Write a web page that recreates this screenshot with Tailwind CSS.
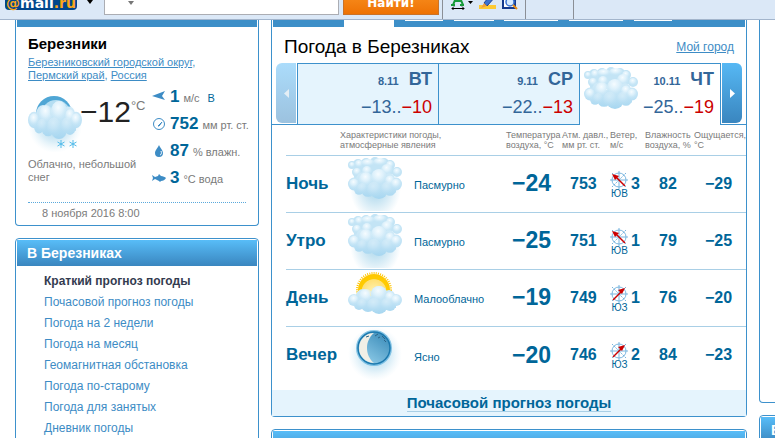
<!DOCTYPE html>
<html lang="ru">
<head>
  <meta charset="UTF-8" />
  <meta name="viewport" content="width=device-width, initial-scale=1.0"/>
  <title>Погода в Березниках</title>
  <script src="https://cdn.jsdelivr.net/npm/@tailwindcss/browser@4"></script>
</head>
<body class="h-screen overflow-hidden flex flex-col bg-white font-['Liberation_Sans',Arial,sans-serif] text-[12px] text-[#7a7a7a]">

  <!-- Иконки -->
  <svg class="absolute w-0 h-0" aria-hidden="true">
    <defs>
      <radialGradient id="puff" cx="45%" cy="30%" r="60%">
        <stop offset="0" stop-color="#f6fcff"/>
        <stop offset="0.5" stop-color="#e2f3fc" stop-opacity="0.8"/>
        <stop offset="1" stop-color="#c4e5f6" stop-opacity="0.3"/>
      </radialGradient>
      <linearGradient id="belly" gradientUnits="userSpaceOnUse" x1="0" y1="0" x2="0" y2="28">
        <stop offset="0" stop-color="#d6edf9"/>
        <stop offset="0.6" stop-color="#bfe2f5"/>
        <stop offset="1" stop-color="#a6d6f0"/>
      </linearGradient>
      <radialGradient id="haze">
        <stop offset="0" stop-color="#6fbbe0" stop-opacity="0.75"/>
        <stop offset="0.6" stop-color="#a5d5ec" stop-opacity="0.4"/>
        <stop offset="1" stop-color="#cbe7f4" stop-opacity="0"/>
      </radialGradient>
      <radialGradient id="sun" cx="50%" cy="55%" r="50%">
        <stop offset="0" stop-color="#fff3b5"/>
        <stop offset="0.75" stop-color="#ffe075"/>
        <stop offset="0.8" stop-color="#ffcc00"/>
        <stop offset="1" stop-color="#ffc800"/>
      </radialGradient>
      <linearGradient id="moon" x1="1" y1="0" x2="0.3" y2="1">
        <stop offset="0" stop-color="#3286b5"/>
        <stop offset="1" stop-color="#8fcbe8"/>
      </linearGradient>
    </defs>
    <symbol id="cloud" viewBox="0 0 54 28" preserveAspectRatio="none">
      <g fill="url(#belly)">
        <circle cx="6" cy="14" r="6"/><circle cx="11" cy="19" r="5"/><circle cx="15" cy="10" r="7"/>
        <circle cx="20" cy="19" r="7"/><circle cx="31" cy="8" r="8"/><circle cx="31" cy="19" r="9"/>
        <circle cx="42" cy="19" r="6"/><circle cx="41" cy="10" r="6"/><circle cx="48" cy="14" r="6"/>
        <path d="M8 10h40v12H8z"/>
      </g>
      <g fill="url(#puff)">
        <circle cx="6" cy="14" r="5"/><circle cx="18" cy="10" r="7"/><circle cx="31" cy="8" r="8"/>
        <circle cx="42" cy="11" r="5"/><circle cx="48" cy="14" r="5"/>
      </g>
      <g fill="url(#puff)" opacity="0.35">
        <circle cx="14" cy="18" r="5"/><circle cx="26" cy="19" r="7"/><circle cx="39" cy="18" r="6"/>
      </g>
    </symbol>
    <symbol id="clouds" viewBox="0 0 55 43">
      <g fill="#c3e4f5">
        <circle cx="4" cy="8" r="4"/><circle cx="10" cy="7" r="5"/><circle cx="18" cy="6" r="5"/>
        <circle cx="27" cy="5" r="5"/><circle cx="36" cy="6" r="5"/><circle cx="42" cy="8" r="5"/>
        <circle cx="9" cy="15" r="5"/><circle cx="39" cy="13" r="7"/><circle cx="49" cy="15" r="5"/>
        <path d="M6 6h38v16H6z"/>
      </g>
      <g fill="url(#puff)">
        <circle cx="4" cy="8" r="3"/><circle cx="11" cy="7" r="4"/><ellipse cx="20" cy="6" rx="7" ry="4"/>
        <ellipse cx="32" cy="5" rx="7" ry="4"/><circle cx="42" cy="8" r="4"/><circle cx="9" cy="15" r="4"/>
        <circle cx="19" cy="14" r="5"/><circle cx="39" cy="13" r="6"/><circle cx="49" cy="15" r="4"/>
      </g>
      <use href="#cloud" x="0" y="12" width="54" height="30"/>
    </symbol>
    <symbol id="sunny" viewBox="0 0 55 43">
      <circle cx="26" cy="18" r="17" fill="none" stroke="#ffc400" stroke-width="2" stroke-dasharray="1 1.2"/>
      <circle cx="26" cy="18" r="16" fill="url(#sun)"/>
      <use href="#cloud" x="0" y="14" width="54" height="28"/>
    </symbol>
    <symbol id="night" viewBox="0 0 55 55">
      <circle cx="27" cy="26" r="27" fill="url(#haze)"/>
      <circle cx="26" cy="20" r="18" fill="#57aedb" opacity="0.7"/>
      <circle cx="26" cy="20" r="16" fill="url(#moon)" stroke="#1b78ad" stroke-width="1.5"/>
      <path d="M26 5A15 15 0 0 0 26 35C21 31 19 25 19 20S21 9 26 5z" fill="#f1efe6"/>
      <path d="M27 8l3-2M30 10l2-1M34 8l3 3M36 12l2 2M18 9l3-1" stroke="#2c6487"/>
    </symbol>
    <symbol id="rose" viewBox="0 0 18 18">
      <g fill="none" stroke="#78b5df">
        <circle cx="9" cy="9" r="7"/>
        <path d="M9 0v18M0 9h18"/>
        <path d="M2 2l14 14M16 2L2 16" stroke-dasharray="2 1"/>
      </g>
    </symbol>
    <symbol id="rose-se" viewBox="0 0 18 18">
      <use href="#rose" width="18" height="18"/>
      <path d="M15 15L5 5" stroke="#c00" stroke-width="1.500"/>
      <path d="M2 3l7 2-4 4z" fill="#c00"/>
    </symbol>
    <symbol id="rose-sw" viewBox="0 0 18 18">
      <use href="#rose" width="18" height="18"/>
      <path d="M3 15L13 5" stroke="#c00" stroke-width="1.500"/>
      <path d="M15 3l-7 2 4 4z" fill="#c00"/>
    </symbol>
  </svg>

  <!-- Панель браузера -->
  <div class="h-5 shrink-0 flex items-end overflow-hidden bg-[#dbe8f7] border-b border-[#a3b5cc] pl-[5px] relative z-10">
    <div class="h-6 w-[72px] mb-[9px] rounded bg-[#00468c] text-center text-[14px] leading-[34px] font-bold font-['DejaVu_Sans',sans-serif] text-white"><span class="text-[#faa61a]">@</span>mail<span class="text-[#faa61a]">.ru</span></div>
    <span class="w-[27px] pl-[10px] pb-[15px]"><svg class="w-[6px] h-[4px]" viewBox="0 0 6 4"><path d="M0 0h6L3 4z" fill="#000"/></svg></span>
    <div class="relative mb-1">
      <input type="text" aria-label="Поиск" class="block w-[235px] h-6 bg-white border border-[#abadb3]">
      <svg class="absolute left-[24px] bottom-[10px] w-[6px] h-[4px]" viewBox="0 0 6 4"><path d="M0 0h6L3 4z" fill="#777"/></svg>
    </div>
    <button class="w-[96px] h-6 mb-1 ml-1 bg-linear-to-b from-[#f98f1d] to-[#ee7203] border border-[#c9732a] text-white text-[12px] leading-[22px] font-bold font-['DejaVu_Sans',sans-serif]">Найти!</button>
    <div class="flex items-end gap-[6px] h-5 ml-[3px] pl-2 pb-[9px] border-l border-[#8b8f96]">
      <svg class="w-[22px] h-[18px]" viewBox="0 0 22 18"><path d="M2 13L7 1l5 12M4 9h6M0 13h4M9 13h4" fill="none" stroke="#169a3a" stroke-width="2"/><path d="M1 16.500h12M3 14.500l-2 2 2 2M11 14.500l2 2-2 2" fill="none" stroke="#000"/><path d="M17 9h5l-2.500 3z" fill="#000"/></svg>
      <svg class="w-[17px] h-[18px]" viewBox="0 0 17 18"><path d="M0 13h17v4H0z" fill="#fdca35"/><path d="M5 11L13 1l4 3-9 10z" fill="#3b73d1" stroke="#1d3f91"/><path d="M2 16l3-5 3 3z" fill="#f2a03d"/></svg>
      <svg class="w-[16px] h-[18px]" viewBox="0 0 16 18"><path d="M1 0v16h12V0" fill="#fff" stroke="#14398c" stroke-width="2"/><circle cx="8" cy="10" r="4" fill="#d7ebff" stroke="#3b73d1" stroke-width="1.500"/><path d="M11 13l4 4" stroke="#e88b12" stroke-width="2"/></svg>
    </div>
    <span class="h-5 w-2 border-r border-[#8b8f96]"></span>
    <span class="h-5 w-12 border-r border-[#8b8f96]"></span>
  </div>

  <div class="flex-1 min-h-0 flex items-start gap-3 pl-[15px]">

    <!-- Левая колонка -->
    <aside class="w-[244px] shrink-0">
      <section class="border border-t-0 border-[#3d91cc] rounded-b px-px pb-px mb-3">
        <div class="h-[7px] bg-[#3d8fc8]"></div>
        <div class="px-[11px] pt-[8px]">
          <h2 class="text-[15px] leading-[18px] font-bold text-black">Березники</h2>
          <p class="mt-[3px] text-[11px] leading-[13px] text-[#3d8cc5]">
            <a href="#" class="underline">Березниковский городской округ</a>,<br>
            <a href="#" class="underline">Пермский край</a>, <a href="#" class="underline">Россия</a>
          </p>
          <div class="flex pt-px">
            <div class="w-[124px] shrink-0 pt-3">
              <div class="flex">
                <svg class="w-[55px] h-[57px] shrink-0" viewBox="0 0 55 57">
                  <circle cx="27" cy="31" r="27" fill="url(#haze)"/>
                  <circle cx="26" cy="19" r="18" fill="#4fa6d5"/>
                  <circle cx="28" cy="20" r="15" fill="#b5def2"/>
                  <use href="#cloud" x="0" y="6" width="54" height="38"/>
                  <path d="M33 45v8M29.500 47l7 4M36.500 47l-7 4M45 45v8M41.500 47l7 4M48.500 47l-7 4" stroke="#52bbea"/>
                </svg>
                <div class="flex text-[30px] leading-[34px] text-[#222] -ml-[3px]">−12<span class="text-[13px] leading-[22px] text-[#7a7a7a]">°C</span></div>
              </div>
              <p class="mt-[6px] text-[11px] leading-[13px]">Облачно, небольшой снег</p>
            </div>
            <ul class="text-[11px] whitespace-nowrap">
              <li class="flex items-center gap-[4px] h-[27px]">
                <svg class="w-[14px] h-3" viewBox="0 0 14 12"><path d="M0 5l13-5-3 5 3 4z" fill="#3d8cc5"/></svg>
                <b class="text-[17px] text-[#069]">1</b> <span class="pt-1">м/с</span> <span class="pt-1 ml-1 text-[#069]">В</span>
              </li>
              <li class="flex items-center gap-[4px] h-[27px]">
                <svg class="w-[14px] h-3" viewBox="0 0 14 12"><circle cx="7" cy="6" r="5.500" fill="none" stroke="#3d8cc5"/><path d="M6 8l4-4-3 4z" stroke="#3d8cc5"/></svg>
                <b class="text-[17px] text-[#069]">752</b> <span class="pt-1">мм рт. ст.</span>
              </li>
              <li class="flex items-center gap-[4px] h-[27px]">
                <svg class="w-[14px] h-3" viewBox="0 0 14 12"><path d="M7 0c1 3 4 5 4 8a4 4 0 0 1-8 0c0-3 3-5 4-8z" fill="#3d8cc5"/><path d="M9 6c1 2 0 4-1 4" stroke="#fff" fill="none"/></svg>
                <b class="text-[17px] text-[#069]">87</b> <span class="pt-1">% влажн.</span>
              </li>
              <li class="flex items-center gap-[4px] h-[27px]">
                <svg class="w-[14px] h-3" viewBox="0 0 14 12"><path d="M0 3l3 2 3-1 1-2 2 2c2 0 4 1 5 2-1 2-3 3-5 3l-1 1-1-1-4-2-3 2 1-3z" fill="#3d8cc5"/></svg>
                <b class="text-[17px] text-[#069]">3</b> <span class="pt-1">°C вода</span>
              </li>
            </ul>
          </div>
          <p class="mt-[11px] mb-[4px] pl-[14px] border-t border-dotted border-[#5aa9dc] pt-[3px] text-[11px] leading-[14px]">8 ноября 2016 8:00</p>
        </div>
      </section>

      <section class="border border-[#3d91cc] rounded-t p-px h-60">
        <h2 class="h-[26px] pl-[10px] bg-linear-to-b from-[#58bdf8] to-[#3a86bf] text-[14px] leading-[26px] font-bold text-white">В Березниках</h2>
        <nav class="pt-[5px] pl-[27px] flex flex-col text-[12px] leading-[21px] text-[#3d8cc5]">
          <b class="text-[#333b4f]">Краткий прогноз погоды</b>
          <a href="#">Почасовой прогноз погоды</a>
          <a href="#">Погода на 2 недели</a>
          <a href="#">Погода на месяц</a>
          <a href="#">Геомагнитная обстановка</a>
          <a href="#">Погода по-старому</a>
          <a href="#">Погода для занятых</a>
          <a href="#">Дневник погоды</a>
        </nav>
      </section>
    </aside>

    <!-- Прогноз -->
    <main class="flex-1 min-w-0">
      <section class="border border-t-0 border-[#3d91cc] rounded-b mb-3">
        <div class="mx-px h-[7px] bg-[#3d8fc8] flex">
          <span class="w-[50px] ml-[71px] bg-white"></span>
          <span class="w-[38px] h-px ml-[11px] bg-white"></span>
          <span class="w-[40px] h-px ml-[11px] bg-white"></span>
          <span class="w-[54px] h-px ml-[10px] bg-white"></span>
          <span class="w-[54px] h-px ml-[11px] bg-white"></span>
          <span class="w-[38px] h-px ml-[11px] bg-white"></span>
        </div>
        <div class="flex items-end justify-between h-9 pl-3 pr-3 pb-[5px]">
          <h1 class="text-[19px] leading-[22px] text-black">Погода в Березниках</h1>
          <a href="#" class="text-[12px] leading-[22px] text-[#3d8cc5] underline">Мой город</a>
        </div>

        <div class="flex h-[62px] text-[#369]">
          <div class="w-[25px] shrink-0 pl-1 border-b border-[#3d91cc]">
            <button aria-label="Назад" class="w-5 h-[60px] flex items-center justify-center rounded-l-md bg-linear-to-b from-[#abdcfb] to-[#9cc2df]"><svg class="w-[5px] h-[9px]" viewBox="0 0 5 9"><path d="M5 0v9L0 4.500z" fill="#e4eef5"/></svg></button>
          </div>
          <div class="flex-1 grid grid-cols-3 border-r border-[#3d91cc] text-[18px] leading-[20px] text-right">
            <div class="border border-r-0 border-[#3d91cc] bg-[#e5f4fd] pr-[6px] pt-[5px]">
              <div class="flex justify-end items-baseline gap-[10px] font-bold"><span class="text-[11px]">8.11</span><span>ВТ</span></div>
              <div class="mt-[6px]">−13..<span class="text-[#c00]">−10</span></div>
            </div>
            <div class="border border-r-0 border-[#3d91cc] bg-[#e5f4fd] pr-[6px] pt-[5px]">
              <div class="flex justify-end items-baseline gap-[10px] font-bold"><span class="text-[11px]">9.11</span><span>СР</span></div>
              <div class="mt-[6px]">−22..<span class="text-[#c00]">−13</span></div>
            </div>
            <div class="flex justify-between border border-r-0 border-b-0 border-[#3d91cc] pl-1 pr-[6px]">
              <svg class="w-[55px] h-[43px] mt-[3px]"><use href="#clouds"/></svg>
              <div class="pt-[5px]">
                <div class="flex justify-end items-baseline gap-[10px] font-bold"><span class="text-[11px]">10.11</span><span>ЧТ</span></div>
                <div class="mt-[6px]">−25..<span class="text-[#c00]">−19</span></div>
              </div>
            </div>
          </div>
          <div class="w-[25px] shrink-0 pl-px border-b border-[#3d91cc]">
            <button aria-label="Вперёд" class="w-5 h-[60px] flex items-center justify-center rounded-r-md bg-linear-to-b from-[#56b8f4] to-[#3a86bf]"><svg class="w-[5px] h-[9px]" viewBox="0 0 5 9"><path d="M0 0v9l5-4.500z" fill="#fff"/></svg></button>
          </div>
        </div>

        <div class="pl-[14px]">
          <table class="w-full table-fixed border-collapse text-left text-[16px] font-bold text-[#069]">
            <colgroup>
              <col class="w-[54px]"><col class="w-[74px]"><col>
              <col class="w-[56px]"><col class="w-[48px]"><col class="w-[35px]"><col class="w-[49px]"><col class="w-[52px]">
            </colgroup>
            <thead>
              <tr class="h-[30px] align-top text-[9px] leading-[10px] text-[#7a7a7a] whitespace-nowrap">
                <th></th>
                <th colspan="2" class="font-normal pt-[5px]">Характеристики погоды,<br>атмосферные явления</th>
                <th class="font-normal pt-[5px]">Температура<br>воздуха, °C</th>
                <th class="font-normal pt-[5px]">Атм. давл.,<br>мм рт. ст.</th>
                <th class="font-normal pt-[5px]">Ветер,<br>м/с</th>
                <th class="font-normal pt-[5px]">Влажность<br>воздуха, %</th>
                <th class="font-normal pt-[5px]">Ощущается,<br>°C</th>
              </tr>
            </thead>
            <tbody>
              <tr class="h-[57px] border-t border-[#a9cfe6]">
                <th class="text-[17px]">Ночь</th>
                <td class="pl-2 align-top">
                  <div class="h-[55px] w-[55px] pt-px bg-radial-[at_50%_60%] from-[#a3d3ea] to-transparent to-65%"><svg class="w-[55px] h-[43px]"><use href="#clouds"/></svg></div>
                </td>
                <td class="text-[11px] font-normal pt-1">Пасмурно</td>
                <td class="pl-[6px] text-[23px]">−24</td>
                <td class="pl-2">753</td>
                <td>
                  <div class="flex items-center gap-[2px]">
                    <div class="w-[19px] pt-[2px] text-center text-[10px] leading-[10px] font-normal"><svg class="w-[18px] h-[18px]"><use href="#rose-se"/></svg>ЮВ</div>3
                  </div>
                </td>
                <td class="pl-[14px]">82</td>
                <td class="pl-[11px]">−29</td>
              </tr>
              <tr class="h-[57px] border-t border-[#a9cfe6]">
                <th class="text-[17px]">Утро</th>
                <td class="pl-2 align-top">
                  <div class="h-[55px] w-[55px] pt-px bg-radial-[at_50%_60%] from-[#a3d3ea] to-transparent to-65%"><svg class="w-[55px] h-[43px]"><use href="#clouds"/></svg></div>
                </td>
                <td class="text-[11px] font-normal pt-1">Пасмурно</td>
                <td class="pl-[6px] text-[23px]">−25</td>
                <td class="pl-2">751</td>
                <td>
                  <div class="flex items-center gap-[2px]">
                    <div class="w-[19px] pt-[2px] text-center text-[10px] leading-[10px] font-normal"><svg class="w-[18px] h-[18px]"><use href="#rose-se"/></svg>ЮВ</div>1
                  </div>
                </td>
                <td class="pl-[14px]">79</td>
                <td class="pl-[11px]">−25</td>
              </tr>
              <tr class="h-[57px] border-t border-[#a9cfe6]">
                <th class="text-[17px]">День</th>
                <td class="pl-2 pt-[2px] align-top"><svg class="w-[55px] h-[43px]"><use href="#sunny"/></svg></td>
                <td class="text-[11px] font-normal pt-1">Малооблачно</td>
                <td class="pl-[6px] text-[23px]">−19</td>
                <td class="pl-2">749</td>
                <td>
                  <div class="flex items-center gap-[2px]">
                    <div class="w-[19px] pt-[2px] text-center text-[10px] leading-[10px] font-normal"><svg class="w-[18px] h-[18px]"><use href="#rose-sw"/></svg>ЮЗ</div>1
                  </div>
                </td>
                <td class="pl-[14px]">76</td>
                <td class="pl-[11px]">−20</td>
              </tr>
              <tr class="h-[57px] border-t border-[#a9cfe6]">
                <th class="text-[17px]">Вечер</th>
                <td class="pl-2 pt-px align-top"><svg class="w-[55px] h-[55px]"><use href="#night"/></svg></td>
                <td class="text-[11px] font-normal pt-1">Ясно</td>
                <td class="pl-[6px] text-[23px]">−20</td>
                <td class="pl-2">746</td>
                <td>
                  <div class="flex items-center gap-[2px]">
                    <div class="w-[19px] pt-[2px] text-center text-[10px] leading-[10px] font-normal"><svg class="w-[18px] h-[18px]"><use href="#rose-sw"/></svg>ЮЗ</div>2
                  </div>
                </td>
                <td class="pl-[14px]">84</td>
                <td class="pl-[11px]">−23</td>
              </tr>
            </tbody>
          </table>
        </div>
        <div class="mt-[7px] h-[26px] bg-[#e5f4fd] text-center leading-[26px]">
          <a href="#" class="inline-block h-[22px] border-b border-[#a9cfe6] text-[15px] font-bold text-[#069]">Почасовой прогноз погоды</a>
        </div>
      </section>

      <section class="border border-[#3d91cc] rounded-t p-px">
        <div class="h-7 bg-linear-to-b from-[#58bdf8] to-[#3a86bf]"></div>
      </section>
    </main>

    <!-- Правая колонка -->
    <aside class="w-4 shrink-0 overflow-hidden">
      <div class="w-60">
        <section class="h-[383px] mb-3 border border-t-0 border-[#3d91cc] rounded-b"></section>
        <section class="border border-[#3d91cc] rounded-t p-px">
          <h2 class="h-[26px] pl-[10px] bg-linear-to-b from-[#58bdf8] to-[#3a86bf] text-[14px] leading-[26px] font-bold text-white">В мире</h2>
        </section>
      </div>
    </aside>
  </div>

</body>
</html>
